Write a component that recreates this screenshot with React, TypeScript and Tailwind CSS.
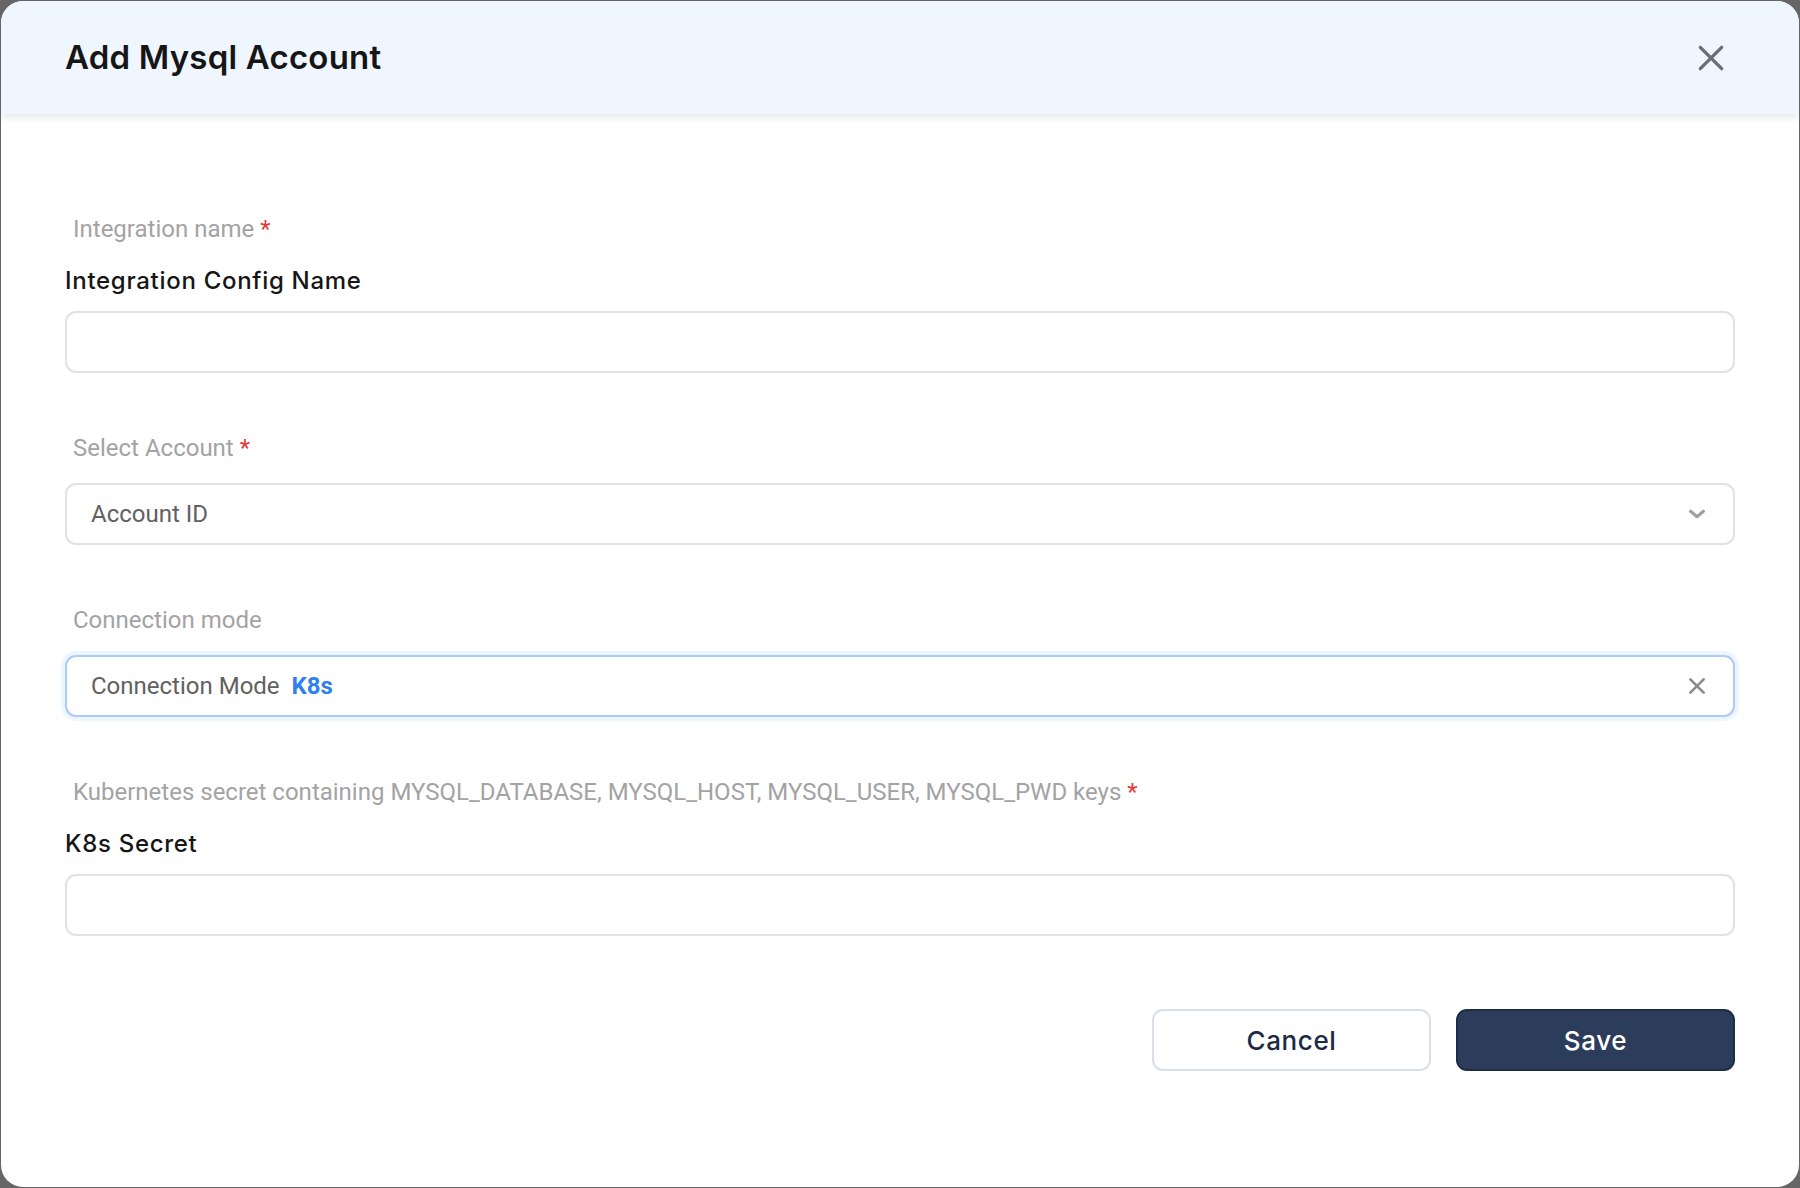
import React from 'react'

const roboto = { fontFamily: 'Roboto, "Liberation Sans", sans-serif' }
const heading = { fontFamily: 'Inter, "Liberation Sans", sans-serif' }

function Hint({ text, required }: { text: string; required?: boolean }) {
  return (
    <div className="pl-2 text-[24px] leading-[28px] text-[#a3a3a3]" style={roboto}>
      {text}
      {required && <span className="ml-[6px] text-[#e53935]">*</span>}
    </div>
  )
}

function Title({ text }: { text: string }) {
  return (
    <div className="mt-6 text-[24px] leading-[28px] font-medium tracking-[0.7px] text-[#161616]" style={heading}>
      {text}
    </div>
  )
}

function TextBox() {
  return <div className="mt-[16px] h-[62px] rounded-[11px] border-2 border-[#e2e2e2] bg-white" />
}

export default function App() {
  return (
    <div className="h-screen w-full bg-[#666666] p-px">
      <div className="flex h-full flex-col overflow-hidden rounded-[22px] bg-white">
        {/* header */}
        <div className="flex h-[113px] shrink-0 items-center justify-between bg-[#eff6ff] pl-16 pr-[72px] shadow-[0_3px_8px_rgba(0,0,0,0.1)]">
          <h1 className="text-[33px] font-semibold tracking-[0.2px] text-[#161616]" style={heading}>
            Add Mysql Account
          </h1>
          <svg width="32" height="32" viewBox="0 0 24 24" fill="none" stroke="#6b6f75" strokeWidth="2.5" strokeLinecap="round">
            <path d="M4 4L20 20M20 4L4 20" />
          </svg>
        </div>

        {/* body */}
        <div className="flex flex-col px-16 pt-[101px]">
          <Hint text="Integration name" required />
          <Title text="Integration Config Name" />
          <TextBox />

          <div className="mt-[61px]">
            <Hint text="Select Account" required />
          </div>
          <div className="mt-[21px] flex h-[62px] items-center justify-between rounded-[11px] border-2 border-[#e2e2e2] bg-white pl-6 pr-[25px]">
            <span className="text-[24px] text-[#616161]" style={roboto}>Account ID</span>
            <svg width="22" height="22" viewBox="0 0 24 24" fill="none" stroke="#a0a0a0" strokeWidth="3.4" strokeLinecap="round" strokeLinejoin="round">
              <path d="M5 9l7 6 7-6" />
            </svg>
          </div>

          <div className="mt-[61px]">
            <Hint text="Connection mode" />
          </div>
          <div className="mt-[21px] flex h-[62px] items-center justify-between rounded-[11px] border-2 border-[#a9cafb] bg-white pl-6 pr-[26px] ring-4 ring-[#eef5ff]">
            <span className="flex items-center gap-3 text-[24px]" style={roboto}>
              <span className="text-[#616161]">Connection Mode</span>
              <span className="font-bold text-[#2f7fec]">K8s</span>
            </span>
            <svg width="20" height="20" viewBox="0 0 24 24" fill="none" stroke="#8c8c8c" strokeWidth="3.2" strokeLinecap="round">
              <path d="M4 4L20 20M20 4L4 20" />
            </svg>
          </div>

          <div className="mt-[61px]">
            <Hint text="Kubernetes secret containing MYSQL_DATABASE, MYSQL_HOST, MYSQL_USER, MYSQL_PWD keys" required />
          </div>
          <Title text="K8s Secret" />
          <TextBox />

          {/* footer */}
          <div className="mt-[73px] flex justify-end gap-[25px]">
            <button className="h-[62px] w-[279px] rounded-[11px] border-2 border-[#d8deec] bg-white text-[26px] font-medium tracking-[0.6px] text-[#1c2a45]" style={heading}>
              Cancel
            </button>
            <button className="h-[62px] w-[279px] rounded-[11px] border-2 border-[#1d2c48] bg-[#2b3d5b] text-[26px] font-medium tracking-[0.6px] text-white" style={heading}>
              Save
            </button>
          </div>
        </div>
      </div>
    </div>
  )
}
